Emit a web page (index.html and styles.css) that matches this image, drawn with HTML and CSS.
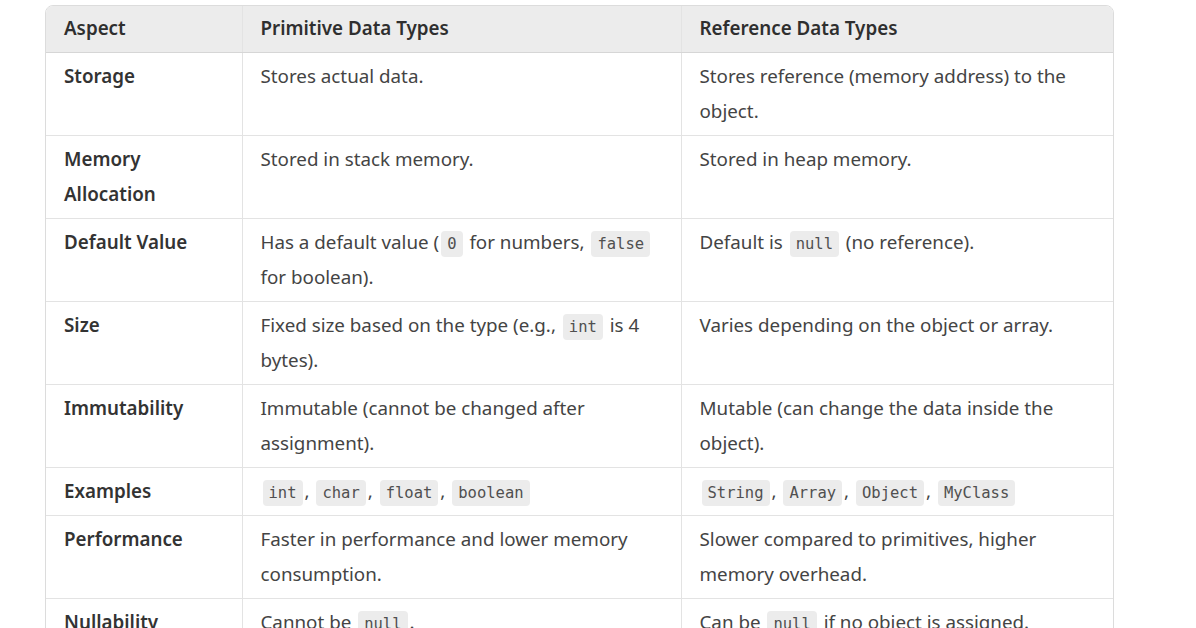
FILE: index.html
```html
<!DOCTYPE html>
<html lang="en">
<head>
  <meta charset="UTF-8" />
  <meta name="viewport" content="width=device-width, initial-scale=1.0" />
  <title>Primitive vs Reference Data Types</title>
  <link rel="stylesheet" href="styles.css">
</head>
<body>
  <div class="table-wrap">
    <table class="compare">
      <colgroup>
        <col class="col-aspect">
        <col class="col-prim">
        <col class="col-ref">
      </colgroup>
      <thead>
        <tr>
          <th>Aspect</th>
          <th>Primitive Data Types</th>
          <th>Reference Data Types</th>
        </tr>
      </thead>
      <tbody>
        <tr>
          <td class="aspect">Storage</td>
          <td>Stores actual data.</td>
          <td>Stores reference (memory address) to the object.</td>
        </tr>
        <tr>
          <td class="aspect">Memory Allocation</td>
          <td>Stored in stack memory.</td>
          <td>Stored in heap memory.</td>
        </tr>
        <tr>
          <td class="aspect">Default Value</td>
          <td>Has a default value (<code>0</code> for numbers, <code>false</code> for boolean).</td>
          <td>Default is <code>null</code> (no reference).</td>
        </tr>
        <tr>
          <td class="aspect">Size</td>
          <td>Fixed size based on the type (e.g., <code>int</code> is 4 bytes).</td>
          <td>Varies depending on the object or array.</td>
        </tr>
        <tr>
          <td class="aspect">Immutability</td>
          <td>Immutable (cannot be changed after assignment).</td>
          <td>Mutable (can change the data inside the object).</td>
        </tr>
        <tr>
          <td class="aspect">Examples</td>
          <td><code>int</code>, <code>char</code>, <code>float</code>, <code>boolean</code></td>
          <td><code>String</code>, <code>Array</code>, <code>Object</code>, <code>MyClass</code></td>
        </tr>
        <tr>
          <td class="aspect">Performance</td>
          <td>Faster in performance and lower memory consumption.</td>
          <td>Slower compared to primitives, higher memory overhead.</td>
        </tr>
        <tr>
          <td class="aspect">Nullability</td>
          <td>Cannot be <code>null</code>.</td>
          <td>Can be <code>null</code> if no object is assigned.</td>
        </tr>
      </tbody>
    </table>
  </div>
</body>
</html>
```

FILE: styles.css
```css
* {
  box-sizing: border-box;
  margin: 0;
  padding: 0;
}

body {
  background: #ffffff;
  font-family: 'Noto Sans', 'Open Sans', sans-serif;
  color: #444444;
  padding: 5px 0 0 45px;
}

.table-wrap {
  width: 1069px;
  border: 1px solid #dcdcdc;
  border-radius: 8px;
  overflow: hidden;
}

.compare {
  width: 100%;
  border-collapse: collapse;
  table-layout: fixed;
  font-size: 18.8px;
  line-height: 35px;
}

.col-aspect { width: 196px; }
.col-prim { width: 439px; }
.col-ref { width: 434px; }

.compare th,
.compare td {
  text-align: left;
  vertical-align: top;
  padding: 6px 18px 6px 18px;
  border-right: 1px solid #e3e3e3;
  border-bottom: 1px solid #e3e3e3;
}

.compare th:last-child,
.compare td:last-child {
  border-right: none;
}

.compare thead th {
  background: #ececec;
  color: #2f2f2f;
  font-weight: 600;
  padding-top: 5px;
  padding-bottom: 6px;
  border-bottom-color: #d6d6d6;
}

.compare .aspect {
  font-weight: 600;
  color: #333333;
}

.compare code {
  font-family: 'DejaVu Sans Mono', 'Liberation Mono', monospace;
  font-size: 15.5px;
  line-height: 1;
  background: #ececec;
  color: #505050;
  padding: 4px 6px;
  margin: 0 2px;
  border-radius: 4px;
}
```
